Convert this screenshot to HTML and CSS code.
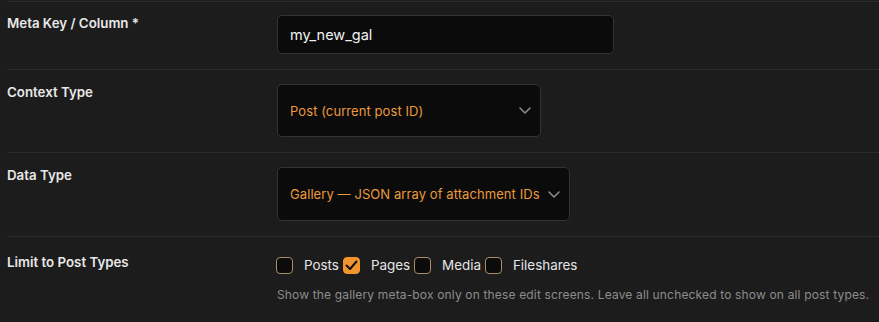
FILE: index.html
```html
<!DOCTYPE html>
<html lang="en">
<head>
<meta charset="utf-8">
<title>Gallery field settings</title>
<link rel="stylesheet" href="styles.css">
</head>
<body>
<div class="form">
  <div class="row row-first">
    <div class="label">Meta Key / Column *</div>
    <div class="control">
      <div class="input">my_new_gal</div>
    </div>
  </div>
  <div class="row">
    <div class="label">Context Type</div>
    <div class="control">
      <div class="select select-context">
        <span class="select-value">Post (current post ID)</span>
        <svg class="chevron" width="12" height="7" viewBox="0 0 12 7"><path d="M1 1l5 5 5-5" fill="none" stroke="#8a8a8a" stroke-width="1.6" stroke-linecap="round" stroke-linejoin="round"/></svg>
      </div>
    </div>
  </div>
  <div class="row">
    <div class="label">Data Type</div>
    <div class="control">
      <div class="select select-data">
        <span class="select-value">Gallery — JSON array of attachment IDs</span>
        <svg class="chevron" width="12" height="7" viewBox="0 0 12 7"><path d="M1 1l5 5 5-5" fill="none" stroke="#8a8a8a" stroke-width="1.6" stroke-linecap="round" stroke-linejoin="round"/></svg>
      </div>
    </div>
  </div>
  <div class="row row-last">
    <div class="label">Limit to Post Types</div>
    <div class="control">
      <div class="checks">
        <label class="check"><span class="box"></span><span class="check-text">Posts</span></label>
        <label class="check"><span class="box box-on"><svg width="13" height="11" viewBox="0 0 13 11"><path d="M1.5 5.5l3.5 3.5 6.5-7.5" fill="none" stroke="#111" stroke-width="2" stroke-linecap="round" stroke-linejoin="round"/></svg></span><span class="check-text">Pages</span></label>
        <label class="check"><span class="box"></span><span class="check-text">Media</span></label>
        <label class="check"><span class="box"></span><span class="check-text">Fileshares</span></label>
      </div>
      <p class="help">Show the gallery meta-box only on these edit screens. Leave all unchecked to show on all post types.</p>
    </div>
  </div>
</div>
</body>
</html>
```
FILE: styles.css
```css
* { box-sizing: border-box; }
html, body { margin: 0; padding: 0; }
body {
  background: #1c1c1c;
  font-family: Inter, "Noto Sans", sans-serif;
  color: #e6e6e6;
  width: 879px;
  height: 322px;
  overflow: hidden;
}
.form {
  padding: 1px 0 0 7px;
}
.row {
  display: grid;
  grid-template-columns: 270px 1fr;
  border-top: 1px solid #2c2c2c;
  padding: 14px 0 15px;
}
.row-first { padding-top: 13px; }
.row-last { padding-top: 17px; }
.label {
  font-size: 13.3px;
  font-weight: 600;
  line-height: 16px;
  color: #e8e8e8;
}
.input {
  width: 337px;
  height: 39px;
  background: #0b0b0b;
  border: 1px solid #333;
  border-radius: 5px;
  padding: 0 12px;
  display: flex;
  align-items: center;
  font-size: 14.5px;
  color: #f2f2f2;
}
.select {
  height: 53px;
  background: #0b0b0b;
  border: 1px solid #333;
  border-radius: 5px;
  padding: 0 9px 0 12px;
  display: flex;
  align-items: center;
  justify-content: space-between;
  font-size: 13px;
  letter-spacing: 0.08px;
  color: #ea9a3c;
}
.select-context { width: 264px; }
.select-data { width: 293px; height: 54px; }
.chevron { flex: none; margin-left: 8px; }
.checks {
  display: flex;
  align-items: center;
  height: 18px;
  margin-top: 2px;
  margin-left: -1px;
}
.check {
  display: flex;
  align-items: center;
  font-size: 13.4px;
  color: #e6e6e6;
}
.box {
  width: 17px;
  height: 17px;
  border: 1px solid #a88e67;
  border-radius: 4px;
  background: #0b0b0b;
  display: flex;
  align-items: center;
  justify-content: center;
}
.box-on {
  background: #f0952e;
  border-color: #f0952e;
}
.check-text {
  margin-left: 11px;
  margin-right: 4px;
}
.help {
  margin: 13px 0 0;
  font-size: 12px;
  letter-spacing: 0.16px;
  line-height: 16px;
  color: #8c8c8c;
}
```
